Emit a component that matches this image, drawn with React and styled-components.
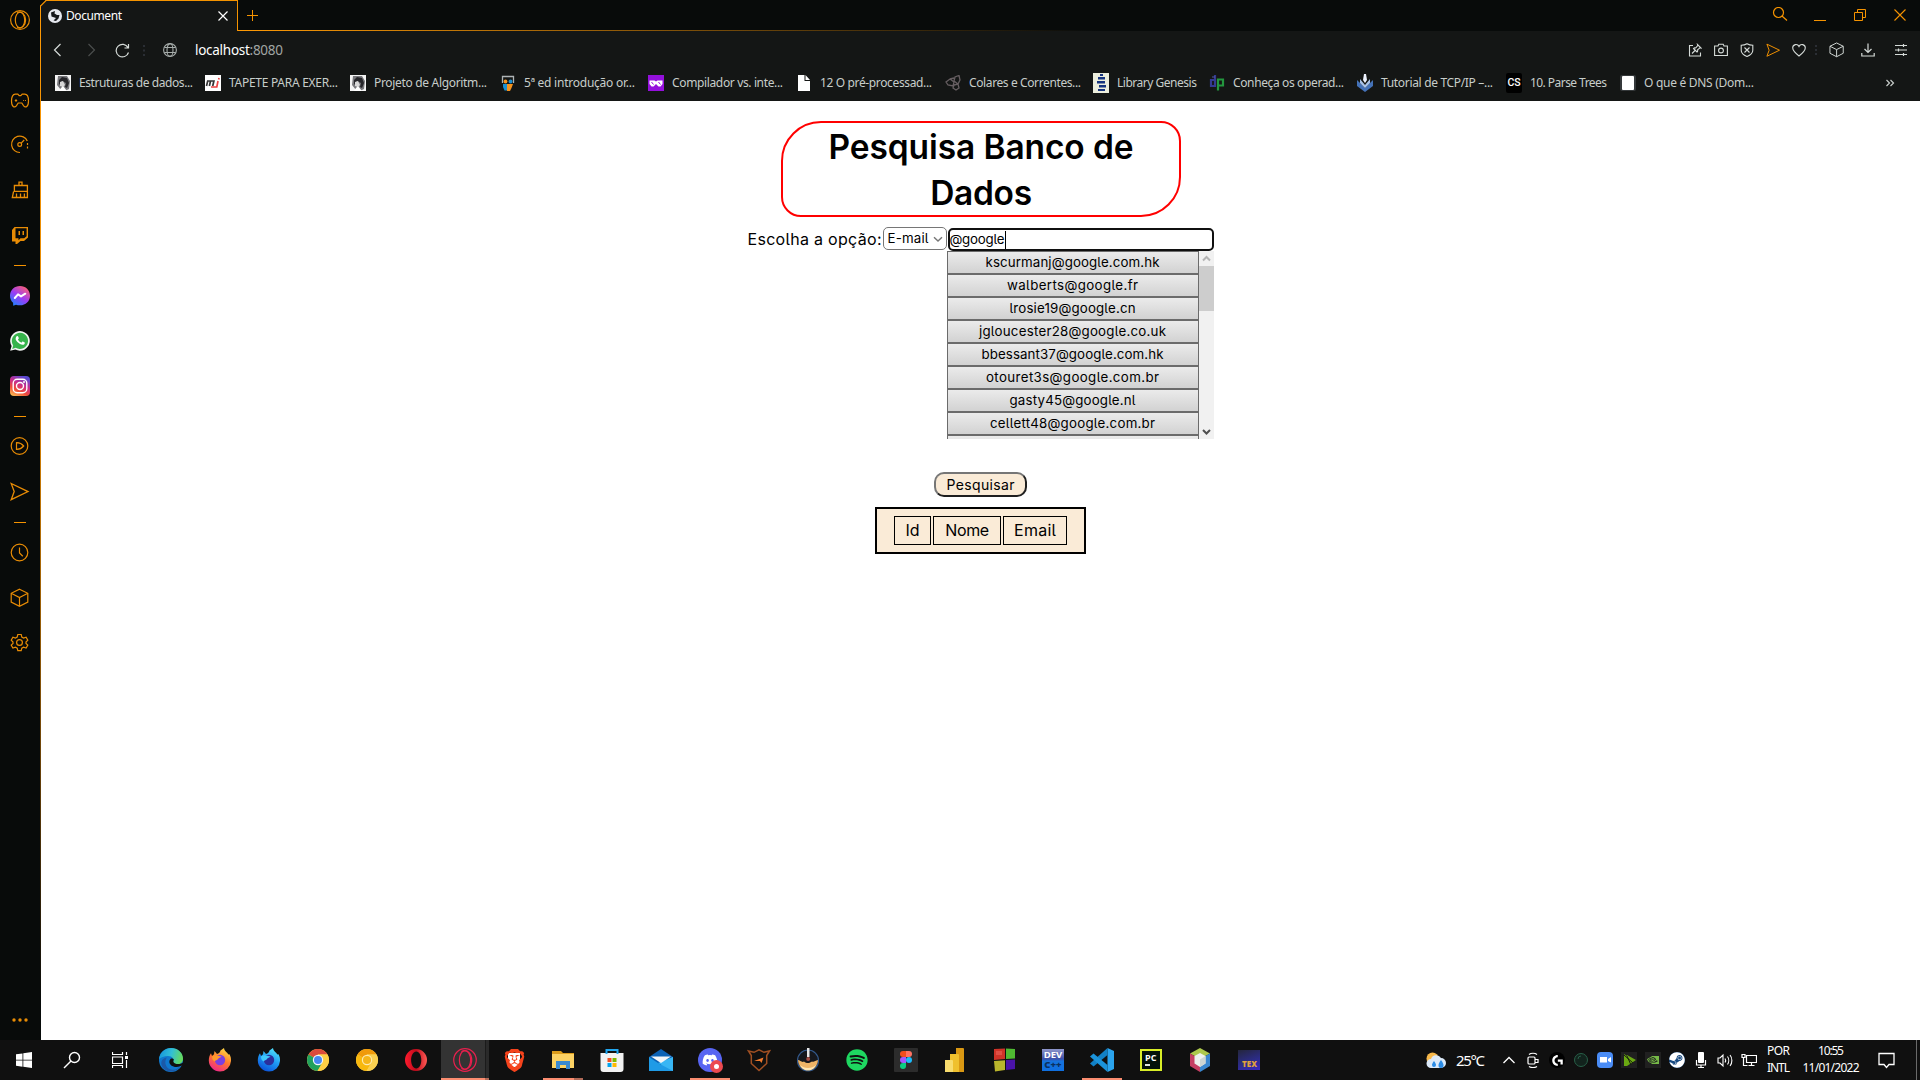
import React, { useLayoutEffect, useRef, useState } from 'react';
import styled, { createGlobalStyle, css } from 'styled-components';
import { FaDiscord, FaSpotify, FaSteam } from 'react-icons/fa6';
import { SiBrave, SiNvidia, SiLogitechg } from 'react-icons/si';

const UI = '"Noto Sans", "Open Sans", sans-serif';
const HAND = 'Inter, "Noto Sans", sans-serif';
const ORANGE = '#f59300';

const Global = createGlobalStyle`
  *, *::before, *::after { box-sizing: border-box; }
  html, body { margin: 0; background: #fff; }
  body { width: 1920px; height: 1080px; overflow: hidden; font-family: ${UI}; }
  button, input { margin: 0; font: inherit; color: inherit; }
  svg { display: block; flex: none; }
`;

/* Text tracked out or in so that the label takes exactly `width` pixels. */
const FitBox = styled.span`
  display: inline-block;
  flex: none;
  width: ${(p) => p.$width}px;
  white-space: pre;
`;
function Fit({ width, children }) {
  const ref = useRef(null);
  const [spacing, setSpacing] = useState(0);
  useLayoutEffect(() => {
    const natural = ref.current.getBoundingClientRect().width;
    setSpacing((width - natural) / (ref.current.textContent.length - 1));
  }, [width]);
  return (
    <FitBox $width={width}>
      <span ref={ref} style={{ letterSpacing: spacing }}>{children}</span>
    </FitBox>
  );
}

/* ---------- shell ---------- */
const Screen = styled.div`
  width: 1920px; height: 1080px; display: flex; flex-direction: column; background: #fff;
`;
const Browser = styled.div`flex: none; height: 1040px; display: flex;`;
const Main = styled.div`flex: 1; min-width: 0; display: flex; flex-direction: column;`;

/* ---------- side bar ---------- */
const Side = styled.nav`
  flex: none; width: 41px; display: flex; flex-direction: column; align-items: center;
  background: #080b0a; color: #e88c05; padding-right: 1px;
  border-right: 1px solid;
  border-image: linear-gradient(180deg, #080b0a 0, #080b0a 6px, #ff9a05 6px, #dc8505 400px, #6b430a 760px, #080b0a 1000px) 1;
`;
const SideIcon = styled.div`
  flex: none; width: 20px; height: 20px; margin-top: ${(p) => p.$gap}px;
  display: flex; align-items: center; justify-content: center;
`;
const SideRule = styled.div`flex: none; width: 12px; height: 1px; margin-top: ${(p) => p.$gap}px; background: ${ORANGE};`;

const Line = ({ s = 20, w = 1, vb, children, ...r }) => (
  <svg width={s} height={s} viewBox={vb || `0 0 ${s} ${s}`} fill="none" stroke="currentColor" strokeWidth={w} {...r}>{children}</svg>
);

const Cube = ({ s = 20 }) => (
  <Line s={s} vb="0 0 20 20" w={1.2}><path d="M9.500 1.200 17.800 5.300v8.800l-8.300 4.300-8.300-4.300V5.300zM1.200 5.300l8.300 4.200 8.300-4.200M9.500 9.500v8.900" /></Line>
);
const Plane = ({ s = 20 }) => (
  <Line s={s} vb="0 0 20 20" w={1.3}><path d="M1.200 1.500 18 9.600 1.200 17.700 4.200 9.600z" /></Line>
);
const MessengerIcon = () => (
  <svg width="20" height="20" viewBox="0 0 20 20">
    <defs>
      <linearGradient id="msg" x1="0.1" y1="1" x2="0.8" y2="0">
        <stop offset="0" stopColor="#1188ff" /><stop offset=".5" stopColor="#9b3cf5" /><stop offset="1" stopColor="#ff6270" />
      </linearGradient>
    </defs>
    <path fill="url(#msg)" d="M10 0C4.300 0 0 4.200 0 9.700c0 2.900 1.200 5.300 3.100 7.100l.1 3 2.800-1.100c1.200.4 2.600.6 4 .6 5.700 0 10-4.100 10-9.600S15.700 0 10 0z" />
    <path d="m4.800 12 3.200-3.700 3 2.100 4.300-2.700" fill="none" stroke="#fff" strokeWidth="2" strokeLinejoin="round" strokeLinecap="round" />
  </svg>
);
const WhatsIcon = () => (
  <svg width="20" height="20" viewBox="0 0 20 20">
    <path d="M.2 19.800 1.600 15A9.800 9.800 0 1 1 5.300 18.500z" fill="#f2f5f2" />
    <path d="m2.200 17.900 1-3.500a8.100 8.100 0 1 1 2.500 2.400z" fill="#37b44c" />
    <path d="M6.700 5.200c.5-.5 1.200-.4 1.400.2l.7 1.600c.1.300 0 .6-.9 1.600.8 1.500 1.900 2.500 3.500 3.200l1-1.200c.3-.3.500-.2 2.300.8.300.2.100 1.300-.4 1.800-1 1-2.500.8-4.300-.1A9.400 9.400 0 0 1 6 9.300c-.7-1.500-.3-3.200.7-4.100z" fill="#fff" />
  </svg>
);
const InstaIcon = () => (
  <svg width="20" height="20" viewBox="0 0 20 20">
    <defs>
      <linearGradient id="ig" x1=".1" y1="1" x2=".6" y2="0">
        <stop offset="0" stopColor="#fdc554" /><stop offset=".35" stopColor="#ef4b3a" /><stop offset=".65" stopColor="#c92c8e" /><stop offset="1" stopColor="#5a49d0" />
      </linearGradient>
    </defs>
    <rect width="20" height="20" rx="4" fill="url(#ig)" />
    <g fill="none" stroke="#fff" strokeWidth="1.400"><rect x="3.200" y="3.200" width="13.600" height="13.600" rx="4" /><circle cx="10" cy="10" r="3.500" /></g>
    <circle cx="14" cy="6" r="1" fill="#fff" />
  </svg>
);

const GxLogo = ({ s, w }) => (
  <Line s={s} vb="0 0 20 20" w={w}><circle cx="10" cy="10" r="9.400" /><ellipse cx="10" cy="10" rx="4.700" ry="7.800" /><path d="M7 3c5-2.600 8.600 2 8.600 7s-3.600 9.600-8.600 7" /></Line>
);

const SIDE = [
  [10, <GxLogo s={20} w={1.2} />],
  [61, <Line w={1.2}><path d="M5.300 3.200h2.500l1.400 1.500h1.600l1.400-1.500h2.500c2.600 0 3.800 2.900 3.800 6.800 0 5.600-2.900 7.300-5 4.600l-1.700-2.600H8.200l-1.700 2.600c-2.100 2.700-5 1-5-4.600 0-3.900 1.200-6.800 3.800-6.800z" /><path d="M4.800 9.500h2.400M6 8.300v2.400M13.200 9.500h.9M15 9.500h.900" /></Line>],
  [23, <Line w={1.2}><path d="M10 18.500A8.200 8.200 0 1 1 17.300 7" /><path d="M17.500 9v7" strokeDasharray="2 1.500" /><circle cx="9.700" cy="10.500" r="1.900" /><path d="m11.200 9.200 3-3.200" /></Line>],
  [26, <Line w={1.300}><path d="M9 5.500V2.100h3v3.400M4.400 5.500h13v5.800h-13zM3.600 11.500l-1.300 6h15.100v-12M6.500 17V13.500M10.500 17V13.500M14.400 17V13.500" /></Line>],
  [25, <svg width="20" height="20" viewBox="0 0 20 20" fill="currentColor"><path fillRule="evenodd" d="M4.500 2H18v10.500l-4 3.500h-3.500L7 19H5.500v-2.500H2V5zM5.500 3.300v10h3v2l2-2h3.700l2.400-2V3.300z" /><path d="M8.500 6H10v4H8.500zM12.500 6H14v4h-1.500z" /></svg>],
  ['rule', 20],
  [20, <MessengerIcon />],
  [25, <WhatsIcon />],
  [25, <InstaIcon />],
  ['rule', 20],
  [19, <Line w={1.200}><circle cx="9.500" cy="10" r="8.300" /><path d="M6.500 6.700c3-.2 5.500 1.300 7.200 3.300-1.700 2-4.200 3.400-7.200 3.300z" /></Line>],
  [26, <Plane />],
  ['rule', 20],
  [20, <Line w={1.200}><circle cx="9.500" cy="9.500" r="8.300" /><path d="M9.500 4.500V10l3.300 3.200" /></Line>],
  [25, <Cube />],
  [25, <Line w={1.200}><g transform="translate(-.5 -.5)"><circle cx="10" cy="10" r="2.900" /><path d="M8.300 2h3.400l.6 2.500 1.800 1 2.500-.8 1.700 2.900L16.500 9.500v1.500l1.800 1.600-1.700 2.900-2.500-.8-1.800 1-.6 2.500H8.300l-.6-2.500-1.800-1-2.500.8-1.700-2.900L3.500 11V9.500L1.700 7.600l1.700-2.900 2.500.8 1.800-1z" /></g></Line>],
  [357, <svg width="20" height="20" fill="currentColor"><circle cx="4" cy="10" r="1.700" /><circle cx="10" cy="10" r="1.700" /><circle cx="16" cy="10" r="1.700" /></svg>],
];

/* ---------- tab strip ---------- */
const TabStrip = styled.div`
  flex: none; height: 31px; display: flex; background: #080b0a; color: ${ORANGE};
`;
const Tab = styled.div`
  flex: none; position: relative; width: 197px; height: 31px; padding: 0 8px 0 7px;
  display: flex; align-items: center; background: #141615; color: #fff;
  border-top: 1px solid ${ORANGE}; border-right: 1px solid ${ORANGE};
  font-size: 12px; line-height: 30px;
`;
const TabCorner = styled.svg`position: absolute; left: -1px; top: -1px;`;
const TabTitle = styled.div`flex: 1; padding-left: 4px; height: 30px;`;
const StripRest = styled.div`
  flex: 1; display: flex; align-items: center; padding: 0 12px 0 8px;
  border-bottom: 1px solid;
  border-image: linear-gradient(90deg, #ff9a05, #0c0e0c 840px, #080b0a 860px) 1;
`;
const WindowButtons = styled.div`margin-left: auto; display: flex; gap: 24px;`;

/* ---------- address bar ---------- */
const AddressBar = styled.div`
  flex: none; height: 39px; display: flex; align-items: center; background: #141615; color: #d5dbd8;
  padding: 0 3px 1px 9px;
`;
const Tool = styled.div`
  flex: none; width: ${(p) => p.$w}px; height: 20px; display: flex; align-items: center; justify-content: center;
  color: ${(p) => p.$color || 'inherit'};
`;
const Url = styled.div`
  padding-left: 14px; margin-top: -1px; font-size: 13.500px; line-height: 20px; color: #fff;
  em { font-style: normal; color: #a0a5a3; }
`;
const ToolGroup = styled.div`margin-left: auto; display: flex;`;

/* ---------- bookmarks ---------- */
const Bookmarks = styled.div`
  flex: none; height: 31px; padding: 0 23px 5px 14px; display: flex; align-items: center; background: #141615;
  color: #c7cdca; font-size: 12px; line-height: 16px;
`;
const Bookmark = styled.div`flex: none; width: ${(p) => p.$w}px; display: flex; align-items: center; gap: 8px;`;
const More = styled.div`margin-left: auto; width: 12px;`;

const Face = () => (
  <svg width="16" height="16"><rect width="16" height="16" fill="#f4f4f4" /><path d="M3 1h9l3 5-1 8-4 2-2-4-2 3-4-5z" fill="#77777b" /><path d="m4 5 3-3 5 1 2 5-2 5-2-1 1-4-4-2-3 4z" fill="#26262a" /><path d="m5 7 3-1 2 4-2 2-3-1z" fill="#d7d7d7" /><path d="m6 13 2-2 4 5H4z" fill="#fff" /></svg>
);
const MARKS = [
  [150, 114, 'Estruturas de dados...', <Face />],
  [145, 109, 'TAPETE PARA EXER...', <svg width="16" height="16"><rect width="16" height="16" fill="#fff" /><path d="m1.500 11 1.200-5h6.200l-1.200 5M5.500 6l-1.100 5" fill="none" stroke="#333" strokeWidth="1.700" /><path d="m13 6-1.200 6H6M14 3l-.3 1.500" fill="none" stroke="#ec4242" strokeWidth="1.700" /></svg>],
  [150, 113, 'Projeto de Algoritm...', <Face />],
  [148, 111, '5ª ed introdução or...', <svg width="16" height="16"><path d="M2.500 8V1.500h11V8" fill="none" stroke="#aeb4b6" strokeWidth="1.300" /><circle cx="5.500" cy="6.500" r="1.900" fill="#f6931d" /><circle cx="10.500" cy="6.500" r="1.900" fill="#1a8fd0" /><path d="M3 9h4v6.500H4.500L3 12z" fill="#1a8fd0" /><path d="M7 9h6l-1.500 4L10 16H7z" fill="#f6931d" /></svg>],
  [148, 111, 'Compilador vs. inte...', <svg width="16" height="16"><rect width="16" height="16" fill="#9410dc" /><path d="M1.500 5.500h5l1.500 1 1.500-1h5v3.500l-2 2.500h-2L8 9l-2.500 2.500h-2l-2-2.500z" fill="#fff" /><path d="M3.500 7l2 2.500M10.500 7l2 2.500" stroke="#9410dc" /></svg>],
  [149, 112, '12 O pré-processad...', <svg width="16" height="16"><path d="M2 0h6.500v6H14v10H2zM9.500 0 14 5H9.500z" fill="#fff" /></svg>],
  [148, 112, 'Colares e Correntes...', <Line s={16} w={1.300} color="#665e61"><path d="m1 7 4-3 4 3-1 4-5-1zM9 6l1-4 4-1.500L15 5l-2 4zM9 10l4-1 1 4-3 2-3-2zM5 4l4-1" /></Line>],
  [116, 80, 'Library Genesis', <svg width="16" height="20"><rect width="16" height="20" fill="#eceedd" /><path d="M7 1h3v2H7zM5 4h7v2.500H5zM4 8h8v2.500H4zM6 12h7v2.500H6zM5 16h7v2H5z" fill="#17357f" /></svg>],
  [148, 111, 'Conheça os operad...', <svg width="16" height="16" fill="none" strokeWidth="2.200"><path d="M6 0v11H2V5h4" stroke="#343a91" /><path d="M9 15.500V4.500h5v6H9" stroke="#23963e" /><path d="M3 2h3" stroke="#5359a5" strokeWidth="1" /></svg>],
  [149, 112, 'Tutorial de TCP/IP –...', <svg width="16" height="18"><path d="M0 6 8 14l8-8v6l-8 6-8-6z" fill="#4472b8" /><path d="m3 5 5 6 5-6v4l-5 5-5-5z" fill="#a9c3e9" /><path d="M7 0h2l1 6-2 3-2-3z" fill="#eef3ff" /></svg>],
  [114, 77, '10. Parse Trees', null],
  [134, 110, 'O que é DNS (Dom...', <svg width="16" height="16"><rect width="16" height="16" rx="2" fill="#34383a" /><rect x="2" y="1" width="12" height="14" rx="1" fill="#fff" /></svg>],
];
const CsBadge = styled.div`
  width: 16px; height: 20px; border-radius: 2px; background: #000; color: #fff; text-align: center;
  font: 500 10.5px/20px Roboto, sans-serif;
`;

/* ---------- web page ---------- */
const Page = styled.main`
  flex: 1; display: flex; flex-direction: column; align-items: center; padding: 20px 0 0 1px;
  font-family: ${HAND}; font-feature-settings: "cv05" 1; color: #000; font-size: 16px;
`;
const Heading = styled.h1`
  margin: 0; width: 400px; height: 96px; border: 2px solid #f00; border-radius: 40px 20px; padding-top: 1px;
  font-size: 33.500px; line-height: 46px; font-weight: 600; text-align: center;
  display: flex; flex-direction: column; align-items: center;
`;
const Form = styled.form`margin-top: 10px; width: 467px; height: 212px; display: flex; align-items: flex-start;`;
const Label = styled.label`width: 135px; line-height: 24px;`;
const Select = styled.div`
  flex: none; width: 64px; height: 23px; border: 1px solid #767676; border-radius: 5px; padding: 0 3px 0 4px;
  display: flex; align-items: center; justify-content: space-between; font-size: 13.300px; line-height: 21px;
`;
const Search = styled.div`flex: none; width: 267px; padding-top: 1px;`;
const Field = styled.div`
  margin-left: 1px; height: 23px; border: 2px solid #101010; border-radius: 5px; padding-left: 0;
  display: flex; align-items: center; font-size: 13.300px; line-height: 19px;
`;
const Caret = styled.i`width: 1px; height: 18px; background: #000; margin-left: 0;`;
const Results = styled.div`height: 188px; display: flex; overflow: hidden;`;
const ResultList = styled.div`flex: none; width: 252px; height: 188px; overflow: hidden;`;
const Result = styled.button`
  display: block; width: 252px; height: 23px; padding: 0 0 1px; border: 1px solid #6b6b6b; border-radius: 0;
  background: linear-gradient(#ebebeb, #d2d2d2); font-size: 13.300px; line-height: 19px; text-align: center;
  font-feature-settings: inherit;
`;
const ScrollTrack = styled.div`
  flex: 1; background: #f1f1f1; display: flex; flex-direction: column; align-items: center; justify-content: space-between;
`;
const ScrollThumb = styled.div`width: 15px; height: 45px; background: #cdcdcd; margin-bottom: auto;`;
const ScrollArrow = styled.div`height: 15px; display: flex; align-items: center; color: ${(p) => p.$color};`;
const Submit = styled.button`
  margin: 33px 1px 0 0; width: 93px; height: 25px; padding: 0; border: 2px solid; border-color: #767676 #1f1f1f #1f1f1f #767676;
  border-radius: 10px; background: #faebd7; font-size: 14px; line-height: 20px; font-feature-settings: inherit;
`;
const TableBox = styled.div`
  margin: 10px 1px 0 0; width: 211px; height: 47px; border: 2px solid #000; background: #faebd7;
  display: flex; justify-content: center; gap: 2px; padding-top: 7px;
`;
const Cell = styled.div`
  width: ${(p) => p.$w}px; height: 29px; border: 1px solid #000; text-align: center; line-height: 27px;
`;
const RESULTS = [
  ['kscurmanj@google.com.hk', 174], ['walberts@google.fr', 131], ['lrosie19@google.cn', 126],
  ['jgloucester28@google.co.uk', 187], ['bbessant37@google.com.hk', 182], ['otouret3s@google.com.br', 173],
  ['gasty45@google.nl', 126], ['cellett48@google.com.br', 165],
];

/* ---------- taskbar ---------- */
const Taskbar = styled.footer`
  flex: none; height: 40px; display: flex; background: #101010; color: #fff;
`;
const Start = styled.div`flex: none; width: 147px; display: flex;`;
const StartItem = styled.div`width: 48px; display: flex; align-items: center; justify-content: center;`;
const TaskButton = styled.div`
  flex: none; width: 48px; margin-right: 1px; height: 40px; display: flex; flex-direction: column; align-items: center;
  padding-top: 8px; justify-content: space-between;
  ${(p) => p.$active && css`background: linear-gradient(90deg, #333 44px, #1b1b1b 44px, #1b1b1b 45px, #2a2a2a 45px);`}
`;
const Underline = styled.div`
  height: 2px; width: ${(p) => (p.$full ? 48 : 40)}px;
  background: linear-gradient(90deg, #fb8d70 ${(p) => p.$solid}px, #b06a58 ${(p) => p.$solid}px);
`;
const Tray = styled.div`
  margin-left: auto; display: flex; align-items: center; padding-right: 3px; font-size: 12px; height: 40px;
`;
const Weather = styled.div`display: flex; align-items: center; gap: 10px; margin-right: 12px; font-size: 15px;`;
const TrayIcon = styled.div`flex: none; width: 24px; display: flex; align-items: center; justify-content: center;`;
const Stack = styled.div`
  width: ${(p) => p.$w}px; display: flex; flex-direction: column; align-items: center; line-height: 17px; height: 36px;
  padding-left: ${(p) => p.$shift}px;
`;
const Notify = styled.div`
  width: 55px; display: flex; justify-content: center; border-right: 1px solid #6a6a6a; height: 40px;
  align-items: center; padding-right: 5px;
`;

const Fox = ({ id, a, b, c, d, core }) => (
  <svg width="24" height="24" viewBox="0 0 24 24">
    <defs>
      <linearGradient id={id} x1=".8" y1="0" x2=".3" y2="1"><stop offset="0" stopColor={a} /><stop offset=".5" stopColor={b} /><stop offset="1" stopColor={c} /></linearGradient>
    </defs>
    <path fill={`url(#${id})`} d="M3 5.200 4 8l2-1.700L6.500 3 9 6c2-.5 3-1.500 3.500-3.500C13.500 1.500 15 .7 16 0c.3 3 3 4 4.500 6.500l1-.3c1.200 2.300 1.700 4.300 1.500 6.800A11.200 11.200 0 0 1 12 23.500 11.200 11.200 0 0 1 .8 12.500C.8 9.500 1.600 7 3 5.200z" />
    <circle cx="12" cy="12" r="5.200" fill={core} />
    <path d="M4 8.500c2-1.500 4-1.600 6-.8l3.500.8c-1 1.500-3 1.300-3.500 2.500-.5 1.500-3 1-3.200 2.500C5 13 4 11 4 8.500z" fill={d} />
  </svg>
);
const Chrome = ({ r, g, y, b, ring }) => (
  <svg width="24" height="24" viewBox="0 0 24 24">
    <circle cx="12" cy="12" r="11" fill={y} />
    <path d="M12 12 2.500 6.500A11 11 0 0 1 21.500 6.500H12z" fill={r} />
    <path d="M12 12 2.500 6.500A11 11 0 0 0 11.500 23l5-8.500z" fill={g} />
    <path d="M12 6.500h9.500A11 11 0 0 1 11.500 23l5-8.400z" fill={y} />
    <circle cx="12" cy="12" r="5.200" fill={ring} /><circle cx="12" cy="12" r="4" fill={b} />
  </svg>
);
const Stage = styled.div`position: relative; width: 24px; height: 24px; display: flex; align-items: center; justify-content: center;`;
const Disc = styled.div`
  width: 24px; height: 24px; border-radius: 50%; background: #5865f2; color: #fff; display: flex; align-items: center; justify-content: center;
`;
const LiveDot = styled.span`
  position: absolute; right: -1px; bottom: -1px; width: 13px; height: 13px; border-radius: 50%; background: #fff; border: 4px solid #ec4a50;
`;
const LionBack = styled.div`position: absolute; left: 6px; top: 5px; width: 12px; height: 14px; background: #fff;`;
const BraveGlyph = styled(SiBrave)`position: relative;`;
const SpotifyGlyph = styled(FaSpotify)`margin-top: 1px; color: #1ed760;`;
const GxMark = styled.span`color: #e8204e;`;
const IconTile = styled.div`
  width: 22px; height: ${(p) => p.$h || 22}px; margin-top: ${(p) => p.$top || 0}px; background: ${(p) => p.$bg};
  border: ${(p) => p.$border || 'none'}; padding: ${(p) => p.$pad || '0'};
  font: 700 ${(p) => p.$size || 9}px/${(p) => p.$lh || 11}px "Open Sans", sans-serif; color: #fff; white-space: nowrap;
  display: flex; flex-direction: column; align-items: ${(p) => p.$align || 'center'};
  b { color: ${(p) => p.$second}; font-weight: 800; }
`;
const Prompt = styled.i`width: 5px; height: 2px; margin-top: 1px; background: #dfe6df;`;
const Tiny = styled.div`
  width: 16px; height: 16px; background: ${(p) => p.$bg}; border-radius: ${(p) => p.$r || 0}px; display: flex; align-items: center; justify-content: center; color: ${(p) => p.$color || '#fff'};
`;

const APPS = [
  <svg width="24" height="24" viewBox="0 0 24 24">
    <defs><linearGradient id="edge" x1="0" y1=".3" x2="1" y2=".5"><stop offset="0" stopColor="#1595dc" /><stop offset=".5" stopColor="#32bfd6" /><stop offset="1" stopColor="#68dc58" /></linearGradient></defs>
    <circle cx="12" cy="12" r="12" fill="#0f78cf" />
    <path d="M0 11C1 4 6 0 12 0c7 0 12 5 12 10.500 0 4-3 6-6.500 6-3 0-4.500-1-3.500-2.500 1.500-2.500-.5-6-5-6C5 8 1.500 9.500 0 11z" fill="url(#edge)" />
    <path d="M8 9.500C5 13 6 20 12 21.500c4 1 7-.5 9.500-4-2 6-12 8.500-17 3C0 15 3 10 8 9.500z" fill="#1b59a8" />
    <path d="M11.500 11c-3 3 0 8 6 8 2.500 0 5-1 7-2.500v-2l-3 1.300c-3 .7-6 .2-7-1.800-.5-1 .3-2 .3-3C14.500 11 12.500 10 11.500 11z" fill="#101010" />
  </svg>,
  <Fox id="fx" a="#ffe247" b="#ff7a2b" c="#f0258a" d="#ff9a2c" core="#7a3fe0" />,
  <Fox id="fd" a="#55e8ff" b="#1f9bf4" c="#0a4fd8" d="#3fc8fb" core="#2b2f9c" />,
  <Chrome r="#db4a3c" g="#21a15c" y="#fdce45" b="#4687f2" ring="#f1f5fb" />,
  <Chrome r="#f09a0a" g="#f8b80e" y="#fad050" b="#f5b51a" ring="#fdeab0" />,
  <svg width="24" height="24" viewBox="0 0 24 24"><defs><linearGradient id="op" x1="0" x2="1"><stop offset="0" stopColor="#ff1b2d" /><stop offset=".5" stopColor="#c00b1c" /><stop offset="1" stopColor="#ff5a55" /></linearGradient></defs><path fillRule="evenodd" fill="url(#op)" d="M12 1a11 11 0 1 0 0 22 11 11 0 0 0 0-22zm.3 2.500c3 0 5 4 5 8.500s-2 8.500-5 8.500-5.200-4-5.200-8.500 2.200-8.500 5.200-8.500z" /></svg>,
  <GxMark><GxLogo s={24} w={1} /></GxMark>,
  <Stage><LionBack /><BraveGlyph size={23} color="#f5431c" /></Stage>,
  <svg width="24" height="24"><path d="M1 3h9l2 2h11v3H1z" fill="#dc9c1b" /><path d="M1 6h22v14H1z" fill="#fcd264" /><path d="M5 13h14v8h-4v-4H9v4H5z" fill="#3a8ad0" /></svg>,
  <svg width="24" height="24"><path d="M.5 5h23v16a3 3 0 0 1-3 3h-17a3 3 0 0 1-3-3z" fill="#f2f2f2" /><path d="M7.500 10h4v4h-4z" fill="#f25022" /><path d="M12.500 10h4v4h-4z" fill="#7fba00" /><path d="M7.500 15h4v4h-4z" fill="#00a4ef" /><path d="M12.500 15h4v4h-4z" fill="#ffb900" /><path d="M6.500 6V2h11v4" fill="none" stroke="#22a7f0" strokeWidth="2" /></svg>,
  <svg width="24" height="24"><path d="M12 1 24 9v14H0V9z" fill="#0c62b5" /><path d="M0 9l12 8 12-8v14H0z" fill="#1f9be6" /><path d="M24 9v14L9 15z" fill="#38b6f4" /><path d="M2 8.500h20L12 15z" fill="#f4f6f8" /></svg>,
  <Stage><Disc><FaDiscord size={16} /></Disc><LiveDot /></Stage>,
  <svg width="24" height="24" fill="none"><path d="M1.500 3 7 4.300 12 1.800l5 2.500L22.500 3l-2.800 4.500v8L12 22.500l-7.700-7v-8z" stroke="#a04f22" strokeWidth="1.500" /><path d="m7 13 9.500-3.500-2 5.500-1.500-2z" fill="#f27a2c" /></svg>,
  <svg width="24" height="24"><circle cx="12" cy="12.500" r="10.500" fill="#15171c" stroke="#33598c" strokeWidth="1.200" /><path d="M2 12c2 0 4 3 6 1.500 3 2.500 6 1.500 8 0 2 1 3-1 6-1.500-.5 6-4 10-10 10S2.500 18 2 12z" fill="#eeb467" /><path d="M4 17c4 4 12 4 16 0-2 4-4.500 5.500-8 5.500S6 21 4 17z" fill="#fde6b4" /><path d="M11 0h2.500v9H11z" fill="#e7e7e7" /><circle cx="12.200" cy="11" r="2" fill="#a34b42" /></svg>,
  <SpotifyGlyph size={22} />,
  <svg width="24" height="24"><rect width="24" height="24" rx="1" fill="#2c2c2c" /><path d="M12 3H9a3 3 0 0 0 0 6h3z" fill="#f24e1e" /><path d="M12 3h3a3 3 0 0 1 0 6h-3z" fill="#ff7262" /><path d="M12 9H9a3 3 0 0 0 0 6h3z" fill="#a259ff" /><circle cx="15" cy="12" r="3" fill="#1abcfe" /><path d="M12 15H9a3 3 0 1 0 3 3z" fill="#0acf83" /></svg>,
  <svg width="24" height="24"><path d="M13 0h7a1 1 0 0 1 1 1v23h-8z" fill="#d99813" /><path d="M7 6h8a1 1 0 0 1 1 1v17H7z" fill="#efc02e" /><path d="M2 12h7a1 1 0 0 1 1 1v11H2z" fill="#f8dc6e" /></svg>,
  <svg width="24" height="24"><path d="m2 1 11-.5V11L2 12z" fill="#cf3328" /><path d="M14 .5 23 1v9.500l-9 .5z" fill="#4fba32" /><path d="m2 13 11-.7V22L3 23.500z" fill="#b9b52c" /><path d="M14 12l9-.5V21l-9 1z" fill="#4a13a8" /><path d="M4 3h6v4H4z" fill="#e96358" opacity=".6" /></svg>,
  <IconTile $bg="linear-gradient(#8f97cc, #3d4fa8 45%, #1673dd 55%, #0f6fe0)" $second="#0b3160" $size={9.5} $top={1} $pad="1px 0 0" $lh={10}>DEV<b>C++</b></IconTile>,
  <svg width="24" height="24"><path d="m17.500 0 6.500 3v18l-6.500 3z" fill="#2ba4ee" /><path d="M17.500 0v7L3.500 18.500 0 15.500z" fill="#1180c5" /><path d="M17.500 24v-7L3.500 5.500 0 8.500z" fill="#1b93da" /></svg>,
  <IconTile $bg="#04120a" $border="2px solid #d9ee28" $size={9} $lh={10} $align="flex-start" $top={1} $pad="2px 0 0 3px">PC<Prompt /></IconTile>,
  <svg width="24" height="24"><path d="M12 0 22 5.500 12 11 2 5.500z" fill="#adc84c" /><path d="M2 5.500 12 11v13L2 18z" fill="#c63f63" /><path d="M22 5.500 12 11v13l10-6z" fill="#3a87cf" /><path d="m12 5 5.500 3v7.500L12 19l-5.500-3.500V8z" fill="#eef1ee" /><path d="M12 11.500 17.500 8v7.500L12 19z" fill="#ccd5d3" /></svg>,
  <IconTile $bg="linear-gradient(160deg, #24263c, #2c2c86 55%, #3a28c0)" $second="#e2a13c" $size={8} $h={20} $top={2} $pad="9px 0 0 1px" $lh={10}><b>TEX</b></IconTile>,
];
const RUNNING = { 6: 44, 8: 31, 11: 40, 19: 40 };

export default function App() {
  return (
    <Screen>
      <Global />
      <Browser>
        <Side>
          {SIDE.map(([gap, icon], i) => (gap === 'rule'
            ? <SideRule key={i} $gap={icon} />
            : <SideIcon key={i} $gap={gap}>{icon}</SideIcon>))}
        </Side>
        <Main>
          <TabStrip>
            <Tab>
              <TabCorner width="7" height="7"><path d="M0 0h6L0 6z" fill="#080b0a" /><path d="M0 6.500 6.500 0" stroke={ORANGE} strokeWidth="1.200" /></TabCorner>
              <svg width="14" height="14"><circle cx="7" cy="7" r="7" fill="#e6e8ee" /><path d="M3 3.500 7 2l-.5 2.500L9 6l2.500 0-1 3.500L8 12l-2.500-.5L8 9 3.500 7.500z" fill="#15171a" /><circle cx="9.500" cy="4" r="1.200" fill="#e6e8ee" /></svg>
              <TabTitle><Fit width={56}>Document</Fit></TabTitle>
              <Line s={12} w={1.200}><path d="m1.500 1.500 9 9M10.500 1.500l-9 9" /></Line>
            </Tab>
            <StripRest>
              <Line s={13} w={1}><path d="M6.500 1v11M1 6.500h11" /></Line>
              <WindowButtons>
                <Line s={16} w={1.200}><circle cx="6.500" cy="5.500" r="5" /><path d="m10 9 5 4.500" /></Line>
                <Line s={16}><path d="M2 13.500h12" /></Line>
                <Line s={16}><path d="M2.500 5.500h8v8h-8zM5.500 5V2.500h8v8H11" /></Line>
                <Line s={16} w={1.100}><path d="m2.500 2.500 11 11M13.500 2.500l-11 11" /></Line>
              </WindowButtons>
            </StripRest>
          </TabStrip>
          <AddressBar>
            <Tool $w={16}><Line s={14} w={1.200}><path d="m9.500 1-6 6 6 6" /></Line></Tool>
            <Tool $w={49} $color="#4b4e4d"><Line s={14} w={1.200}><path d="m4.500 1 6 6-6 6" /></Line></Tool>
            <Tool $w={14}><Line s={15} w={1.200}><path d="M13 4.600A6.300 6.300 0 1 0 13.500 9.500M13.500 1v4h-4" /></Line></Tool>
            <Tool $w={30} $color="#2e3138"><Line s={14} w={1.800}><path d="M7 2v11" strokeDasharray="2 2.500" /></Line></Tool>
            <Tool $w={22} $color="#a6acaa"><Line s={14} w={1.100}><circle cx="7" cy="7" r="6.400" /><ellipse cx="7" cy="7" rx="3" ry="6.400" /><path d="M1.500 4.500h11M1.500 9.500h11" /></Line></Tool>
            <Url><Fit width={88}>localhost<em>:8080</em></Fit></Url>
            <ToolGroup>
              <Tool $w={26}><Line s={14} w={1.100}><path d="M5 2.500H1.500v10.500h11V9.500M4 10.500l3-3M5.500 5.500l3.500 3.500c.8-.7.8-1.500.5-2.200l2.500-2 1 .2L9.500 1.500l.2 1-2 2.500c-.8-.2-1.600-.2-2.200.5z" /></Line></Tool>
              <Tool $w={26}><Line s={14} w={1.100}><path d="M.6 3H4l.8-1.800h4.400L10 3h3.400v9.500H.6z" /><circle cx="7" cy="7.500" r="2.400" /></Line></Tool>
              <Tool $w={26}><Line s={14} w={1.100}><path d="M7 .8c2 1.200 3.800 1.500 5.800 1.500v5c0 3-2.600 5-5.800 6.200C3.800 12.300 1.200 10.300 1.200 7.300v-5C3.200 2.300 5 2 7 .8zM4.500 4.500l5 5M9.500 4.500l-5 5" /></Line></Tool>
              <Tool $w={27} $color={ORANGE}><Plane s={15} /></Tool>
              <Tool $w={24}><Line s={14} w={1.100}><path d="M7 13C3.500 10.300.7 7.800.7 4.800A3.300 3.300 0 0 1 7 3.500a3.300 3.300 0 0 1 6.300 1.300C13.300 7.800 10.500 10.300 7 13z" /></Line></Tool>
              <Tool $w={10} $color="#2e3138"><Line s={10} w={1.800}><path d="M5 0v10" strokeDasharray="2 2" /></Line></Tool>
              <Tool $w={31}><Cube s={16} /></Tool>
              <Tool $w={32}><Line s={14} w={1.200}><path d="M7 .5v9M3.500 6 7 9.500 10.500 6M.8 10v3h12.400v-3" /></Line></Tool>
              <Tool $w={33}><Line s={14} w={1.200}><path d="M1 2.500h12M1 7h12M1 11.500h12M9.500 1v3M4.500 5.500v3M9.500 10v3" /></Line></Tool>
            </ToolGroup>
          </AddressBar>
          <Bookmarks>
            {MARKS.map(([w, tw, text, icon]) => (
              <Bookmark key={text} $w={w}>{icon || <CsBadge>CS</CsBadge>}<Fit width={tw}>{text}</Fit></Bookmark>
            ))}
            <More><Line s={10} w={1.200}><path d="m1.500 2 3 3-3 3M5.500 2l3 3-3 3" /></Line></More>
          </Bookmarks>
          <Page>
            <Heading><Fit width={305}>Pesquisa Banco de</Fit><Fit width={102}>Dados</Fit></Heading>
            <Form>
              <Label><Fit width={134}>Escolha a opção:</Fit></Label>
              <Select><Fit width={41}>E-mail</Fit><Line s={10} w={1.400} color="#767676"><path d="M1 3.200 5 7l4-3.800" /></Line></Select>
              <Search>
                <Field><Fit width={55}>@google</Fit><Caret /></Field>
                <Results>
                  <ResultList>
                    {RESULTS.map(([t, w]) => <Result key={t} type="button"><Fit width={w}>{t}</Fit></Result>)}
                    <Result type="button" />
                  </ResultList>
                  <ScrollTrack>
                    <ScrollArrow $color="#b4b4b4"><Line s={9} w={2}><path d="m1 6.500 3.500-3.500L8 6.500" /></Line></ScrollArrow>
                    <ScrollThumb />
                    <ScrollArrow $color="#505050"><Line s={9} w={2}><path d="M1 3l3.500 3.500L8 3" /></Line></ScrollArrow>
                  </ScrollTrack>
                </Results>
              </Search>
            </Form>
            <Submit type="button"><Fit width={68}>Pesquisar</Fit></Submit>
            <TableBox>
              <Cell $w={37}><Fit width={14}>Id</Fit></Cell>
              <Cell $w={68}><Fit width={44}>Nome</Fit></Cell>
              <Cell $w={64}><Fit width={42}>Email</Fit></Cell>
            </TableBox>
          </Page>
        </Main>
      </Browser>
      <Taskbar>
        <Start>
          <StartItem><svg width="16" height="16" fill="#fff"><path d="M0 2.300 6.500 1.400v6.300H0zM7.300 1.300 16 0v7.700H7.300zM0 8.500h6.500v6.200L0 13.800zM7.300 8.500H16V16l-8.700-1.200z" /></svg></StartItem>
          <StartItem><Line s={18} w={1.400}><circle cx="11.500" cy="6.500" r="5" /><path d="M8 10 1 17" /></Line></StartItem>
          <StartItem><Line s={16} w={1.200}><path d="M.5 0v2.500h10V0M.5 5h10v6.500H.500zM.5 16v-2.500h10V16M14.500 0v3M14.500 8v8" /><path d="M13 4h3v3h-3z" fill="currentColor" stroke="none" /></Line></StartItem>
        </Start>
        {APPS.map((icon, i) => (
          <TaskButton key={i} $active={i === 6}>{icon}{RUNNING[i] && <Underline $full={i === 6} $solid={RUNNING[i]} />}</TaskButton>
        ))}
        <Tray>
          <Weather>
            <svg width="20" height="17"><circle cx="6.500" cy="6.500" r="6" fill="#f7b84a" /><path d="M5 16a4.500 4.500 0 0 1 0-9 5.500 5.500 0 0 1 10-1 5 5 0 0 1 0 10z" fill="#dbe9f8" /><path d="M8 9c1.500 2 2 3 2 4a2 2 0 0 1-4 0c0-1 .5-2 2-4zM15 8c2 2.500 2.500 4 2.500 5.500a2.500 2.500 0 0 1-5 0C12.500 12 13 10.500 15 8z" fill="#2b8ce6" /></svg>
            <Fit width={29}>25°C</Fit>
          </Weather>
          <TrayIcon><Line s={14} w={1.300}><path d="m1.500 10 5.500-5.500 5.500 5.500" /></Line></TrayIcon>
          <TrayIcon><Line s={16} w={1.200}><rect x="3" y="5" width="7" height="7" rx="1" /><path d="M10 7.500h3v3h-3M4 2.500C6 .8 10 .8 12 2.500M4 14.500c2 1.500 6 1.500 8 0" /></Line></TrayIcon>
          <TrayIcon><Tiny $bg="#000" $r={8}><SiLogitechg size={11} /></Tiny></TrayIcon>
          <TrayIcon><svg width="16" height="16"><circle cx="8" cy="8" r="6.500" fill="#12231d" stroke="#286048" /><path d="M5 7a3 3 0 0 1 3-3" stroke="#286048" fill="none" /></svg></TrayIcon>
          <TrayIcon><Tiny $bg="#4a8cf5" $r={4}><svg width="11" height="8"><path d="M0 1h7v5.500H0zM8 3l3-2v5.500L8 5z" fill="#fff" /></svg></Tiny></TrayIcon>
          <TrayIcon><Tiny $bg="#202020"><svg width="14" height="14"><path d="m2 1 3 2v10l-3 0zM5 2l9 5-9 6z" fill="#6aa812" /><path d="m5 3 4 9M2 2l9 8" stroke="#161f0a" /></svg></Tiny></TrayIcon>
          <TrayIcon><Tiny $bg="#202020" $color="#76b947"><SiNvidia size={12} /></Tiny></TrayIcon>
          <TrayIcon><Tiny $bg="#174a82" $r={8}><FaSteam size={16} /></Tiny></TrayIcon>
          <TrayIcon><svg width="12" height="16"><rect x="3" width="6" height="11" rx="1" fill="#fff" /><path d="M1.500 8v5h9V8M6 13v3M3 15.500h6" fill="none" stroke="#fff" strokeWidth="1.200" /></svg></TrayIcon>
          <TrayIcon><Line s={17} w={1.100}><path d="M1 6h2l3-3v11l-3-3H1zM8 6.500c.8 1.200.8 2.800 0 4M10.500 4.500c1.600 2.200 1.600 5.800 0 8M13 3c2.500 3 2.500 8 0 11" /></Line></TrayIcon>
          <TrayIcon><Line s={16} w={1.200}><path d="M1 2.500h3v3H1zM2.500 5.500v8h4M5.500 3.500h10v7h-10zM10.500 10.500v3M7.500 13.500h6" /></Line></TrayIcon>
          <Stack $w={31} $shift={4}><Fit width={23}>POR</Fit><Fit width={23}>INTL</Fit></Stack>
          <Stack $w={70} $shift={8}><Fit width={26}>10:55</Fit><Fit width={57}>11/01/2022</Fit></Stack>
          <Notify><Line s={17} w={1.300}><path d="M1 1.500h15v11H11L8.500 15.500 6 12.500H1z" /></Line></Notify>
        </Tray>
      </Taskbar>
    </Screen>
  );
}
